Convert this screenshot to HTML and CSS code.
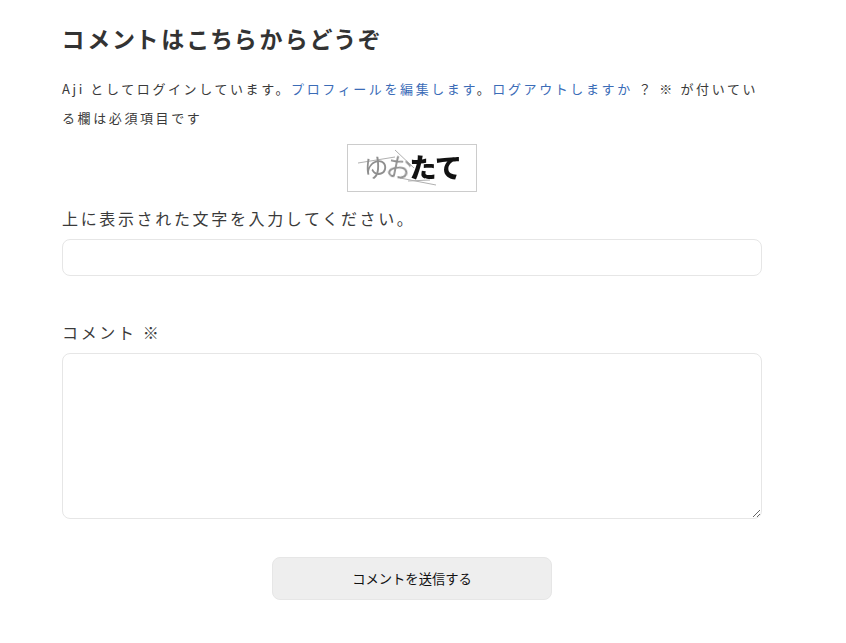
FILE: index.html
```html
<!DOCTYPE html>
<html lang="ja">
<head>
  <meta charset="UTF-8">
  <meta name="viewport" content="width=device-width, initial-scale=1.0">
  <title>コメント</title>
  <link rel="stylesheet" href="styles.css">
</head>
<body>
  <div id="respond">
    <h3 class="reply-title">コメントはこちらからどうぞ</h3>
    <form>
      <p class="logged-in">Aji としてログインしています。<a href="#">プロフィールを編集します</a>。<a href="#">ログアウトしますか</a> ？ ※ が付いている欄は必須項目です</p>
      <div class="captcha-row">
        <div class="captcha">
          <svg class="captcha-lines" width="128" height="46" viewBox="0 0 128 46">
            <path d="M10 18 L47 12 M47 5 L66 23 M52 33 L88 40 M60 36 L82 35" fill="none" stroke="#b0b0b0" stroke-width="1"/>
          </svg>
          <span class="captcha-faint">ゆ</span><span class="captcha-faint captcha-tilt">お</span><span class="captcha-bold">たて</span>
        </div>
      </div>
      <label class="field-label" for="captcha-input">上に表示された文字を入力してください。</label>
      <input class="text-input" id="captcha-input" type="text">
      <label class="field-label comment-label" for="comment">コメント ※</label>
      <textarea class="comment-input" id="comment"></textarea>
      <div class="submit-row">
        <button class="submit-button" type="button">コメントを送信する</button>
      </div>
    </form>
  </div>
</body>
</html>
```

FILE: styles.css
```css
body {
  margin: 0;
  background: #fff;
  color: #3a3a3a;
  font-family: "Noto Sans CJK JP", "Noto Sans", sans-serif;
}

#respond {
  width: 700px;
  padding: 22px 0 0 62px;
}

.reply-title {
  margin: 0 0 20px;
  font-size: 23px;
  line-height: 32px;
  font-weight: 700;
  letter-spacing: 0.173em;
  font-feature-settings: "palt";
  color: #333;
}

.logged-in {
  margin: 0 0 12px;
  font-size: 13px;
  line-height: 29px;
  letter-spacing: 2.6px;
}

.logged-in a {
  color: #3b6cb7;
  text-decoration: none;
}

.captcha-row {
  display: flex;
  justify-content: center;
}

.captcha {
  position: relative;
  display: flex;
  align-items: center;
  justify-content: center;
  box-sizing: border-box;
  width: 130px;
  height: 48px;
  padding-bottom: 4px;
  border: 1px solid #ccc;
  overflow: hidden;
}

.captcha-lines {
  position: absolute;
  top: 0;
  left: 0;
}

.captcha-faint {
  color: #8f8f8f;
  font-size: 25px;
  font-weight: 400;
  letter-spacing: -2px;
  filter: blur(0.4px);
}

.captcha-tilt {
  transform: rotate(12deg);
}

.captcha-bold {
  color: #111;
  font-size: 27px;
  font-weight: 900;
  letter-spacing: -1.5px;
  filter: blur(0.4px);
}

.field-label {
  display: block;
  margin-top: 12px;
  font-size: 16px;
  line-height: 28px;
  letter-spacing: 0.166em;
}

.text-input {
  display: block;
  box-sizing: border-box;
  width: 700px;
  height: 37px;
  margin-top: 7px;
  border: 1px solid #e6e6e6;
  border-radius: 8px;
  outline: none;
}

.comment-label {
  margin-top: 42px;
}

.comment-input {
  display: block;
  box-sizing: border-box;
  width: 700px;
  height: 166px;
  margin-top: 7px;
  border: 1px solid #e6e6e6;
  border-radius: 8px;
  outline: none;
}

.submit-row {
  display: flex;
  justify-content: center;
  margin-top: 38px;
}

.submit-button {
  width: 280px;
  height: 43px;
  padding: 0 6px 1px;
  background: #eee;
  border: 1px solid #e6e6e6;
  border-radius: 8px;
  color: #111;
  font-family: inherit;
  font-size: 13.3px;
}
```
